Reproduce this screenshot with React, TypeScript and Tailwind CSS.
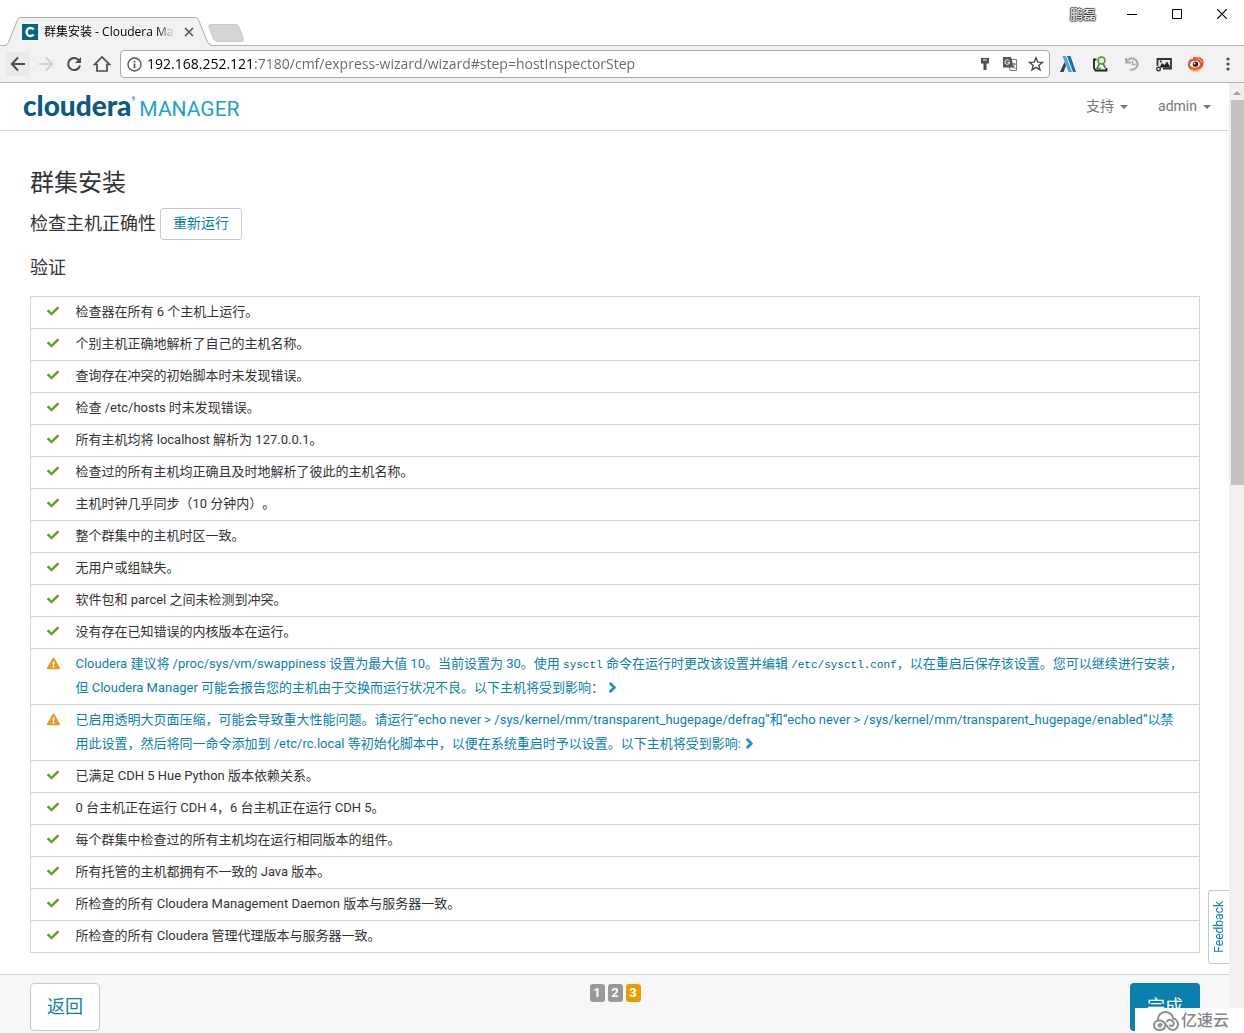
import type { ReactNode } from "react";
import { FaCheck, FaExclamationTriangle, FaChevronRight } from "react-icons/fa";

type Row = { kind: "ok" | "warn"; content: ReactNode };

const code = "font-['Liberation_Mono',monospace] text-[11px] leading-none text-[#006a8f]";

const rows: Row[] = [
  { kind: "ok", content: "检查器在所有 6 个主机上运行。" },
  { kind: "ok", content: "个别主机正确地解析了自己的主机名称。" },
  { kind: "ok", content: "查询存在冲突的初始脚本时未发现错误。" },
  { kind: "ok", content: "检查 /etc/hosts 时未发现错误。" },
  { kind: "ok", content: "所有主机均将 localhost 解析为 127.0.0.1。" },
  { kind: "ok", content: "检查过的所有主机均正确且及时地解析了彼此的主机名称。" },
  { kind: "ok", content: "主机时钟几乎同步（10 分钟内）。" },
  { kind: "ok", content: "整个群集中的主机时区一致。" },
  { kind: "ok", content: "无用户或组缺失。" },
  { kind: "ok", content: "软件包和 parcel 之间未检测到冲突。" },
  { kind: "ok", content: "没有存在已知错误的内核版本在运行。" },
  {
    kind: "warn",
    content: (
      <>
        Cloudera 建议将 /proc/sys/vm/swappiness 设置为最大值 10。当前设置为 30。使用{" "}
        <code className={code}>sysctl</code> 命令在运行时更改该设置并编辑{" "}
        <code className={code}>/etc/sysctl.conf</code>，以在重启后保存该设置。您可以继续进行安装，但 Cloudera Manager
        可能会报告您的主机由于交换而运行状况不良。以下主机将受到影响：
      </>
    ),
  },
  {
    kind: "warn",
    content:
      "已启用透明大页面压缩，可能会导致重大性能问题。请运行“echo never > /sys/kernel/mm/transparent_hugepage/defrag”和“echo never > /sys/kernel/mm/transparent_hugepage/enabled”以禁用此设置，然后将同一命令添加到 /etc/rc.local 等初始化脚本中，以便在系统重启时予以设置。以下主机将受到影响:",
  },
  { kind: "ok", content: "已满足 CDH 5 Hue Python 版本依赖关系。" },
  { kind: "ok", content: "0 台主机正在运行 CDH 4，6 台主机正在运行 CDH 5。" },
  { kind: "ok", content: "每个群集中检查过的所有主机均在运行相同版本的组件。" },
  { kind: "ok", content: "所有托管的主机都拥有不一致的 Java 版本。" },
  { kind: "ok", content: "所检查的所有 Cloudera Management Daemon 版本与服务器一致。" },
  { kind: "ok", content: "所检查的所有 Cloudera 管理代理版本与服务器一致。" },
];

function TabStrip() {
  return (
    <div className="flex h-[46px] shrink-0 items-end border-b border-[#b4b4b4] bg-white">
      <div className="relative -mb-px ml-1 flex h-[29px] w-[208px] items-center pl-[18px]">
        <svg className="absolute inset-0" width="208" height="29" viewBox="0 0 208 29" fill="none" aria-hidden="true">
          <path d="M0 29C4 28 4 26 5 24L13 4C14 1 15 .5 18 .5H190C193 .5 194 1 195 4L203 24C204 26 205 28 208 29Z" fill="#f2f2f2" />
          <path d="M0 28.5C4 28 4 26 5 24L13 4C14 1 15 .5 18 .5H190C193 .5 194 1 195 4L203 24C204 26 205 28 208 28.5" stroke="#aaa" />
        </svg>
        <svg className="relative shrink-0" width="16" height="16" viewBox="0 0 16 16" fill="none" aria-hidden="true">
          <path d="M0 0h16v16H0z" fill="#04677c" />
          <path d="M11.6 5.6C10.8 4.4 9.7 4 8.4 4 6.2 4 4.6 5.7 4.6 8s1.600 4 3.800 4c1.300 0 2.400-.5 3.200-1.600" stroke="#fff" strokeWidth="2.600" />
        </svg>
        <span className="relative ml-1.5 w-[133px] overflow-hidden whitespace-nowrap font-['Open_Sans','Noto_Sans_CJK_SC',sans-serif] text-xs text-black [mask-image:linear-gradient(to_right,black_112px,transparent_132px)]">
          群集安装 - Cloudera Ma
        </span>
        <button aria-label="关闭标签页" className="relative ml-[7px] shrink-0">
          <svg width="10" height="10" viewBox="0 0 10 10" stroke="#555" strokeWidth="1.600">
            <path d="M1 1l8 8M9 1L1 9" />
          </svg>
        </button>
      </div>
      <button aria-label="新标签页" className="-ml-1 mb-[3px]">
        <svg width="36" height="18" viewBox="0 0 36 18">
          <path d="M3 .5H26C29 .5 30 1 31 3L35 14C36 17 35 17.500 33 17.500H10C7 17.500 6 16 5 14L1 3C.5 1 1 .5 3 .5Z" fill="#d4d4d4" stroke="#cacaca" />
        </svg>
      </button>
      <div className="ml-auto flex items-start self-start">
        <span className="mr-[13px] mt-[7px] font-['Noto_Sans_CJK_SC',sans-serif] text-[13px] leading-[14px] text-white [text-shadow:1px_0_1px_#333,-1px_0_1px_#333,0_1px_1px_#333,0_-1px_1px_#333]">
          鹏磊
        </span>
        <button aria-label="最小化" className="flex h-[27px] w-[45px] items-center justify-center">
          <svg width="10" height="10" viewBox="0 0 10 10"><path d="M0 5.500h10" stroke="#000" /></svg>
        </button>
        <button aria-label="最大化" className="flex h-[27px] w-[45px] items-center justify-center">
          <svg width="10" height="10" viewBox="0 0 10 10"><path d="M.5.5h9v9h-9z" stroke="#000" fill="none" /></svg>
        </button>
        <button aria-label="关闭" className="flex h-[27px] w-[45px] items-center justify-center">
          <svg width="10" height="10" viewBox="0 0 10 10"><path d="M0 0l10 10M10 0L0 10" stroke="#000" strokeWidth="1.200" /></svg>
        </button>
      </div>
    </div>
  );
}

function Toolbar() {
  return (
    <div className="flex h-[37px] shrink-0 items-center border-b border-[#b4b4b4] bg-[#f2f2f2]">
      <button aria-label="后退" className="ml-1.5 flex h-6 w-6 items-center justify-center bg-[#ebebeb]">
        <svg width="16" height="16" viewBox="0 0 16 16" fill="none" stroke="#4c4c4c" strokeWidth="2"><path d="M15 8H2M8 1.500L1.800 8 8 14.500" /></svg>
      </button>
      <button aria-label="前进" className="ml-1 flex h-6 w-6 items-center justify-center">
        <svg width="16" height="16" viewBox="0 0 16 16" fill="none" stroke="#d2d2d2" strokeWidth="2"><path d="M1 8h13M8 1.500L14.200 8 8 14.500" /></svg>
      </button>
      <button aria-label="重新加载" className="ml-1 flex h-6 w-6 items-center justify-center">
        <svg width="16" height="16" viewBox="0 0 16 16" fill="none"><path d="M13 4.500A6 6 0 1 0 14 9.500" stroke="#4c4c4c" strokeWidth="2" /><path d="M15 1v6H9z" fill="#4c4c4c" /></svg>
      </button>
      <button aria-label="主页" className="ml-1 flex h-6 w-6 items-center justify-center">
        <svg width="18" height="18" viewBox="0 0 18 18" fill="none" stroke="#4c4c4c" strokeWidth="1.700"><path d="M1.500 9.500L9 2l7.500 7.500H14V16H4V9.500z" /></svg>
      </button>
      <div className="ml-1.5 flex h-[28px] min-w-0 flex-1 items-center rounded-sm border border-[#a6a6a6] bg-white pl-1.5 pr-[5px]">
        <svg className="shrink-0" width="15" height="15" viewBox="0 0 15 15" fill="none" aria-hidden="true">
          <circle cx="7.500" cy="7.500" r="6.500" stroke="#555" strokeWidth="1.400" />
          <path d="M7.500 6.500v4.700M7.500 3.700v1.700" stroke="#555" strokeWidth="1.700" />
        </svg>
        <input
          aria-label="地址"
          readOnly
          value="192.168.252.121:7180/cmf/express-wizard/wizard#step=hostInspectorStep"
          className="ml-[5px] min-w-0 flex-1 bg-[linear-gradient(to_right,#000_108px,#666_108px)] bg-clip-text font-['Open_Sans',sans-serif] text-sm text-transparent outline-none"
        />
        <svg className="shrink-0" width="10" height="14" viewBox="0 0 10 14" aria-hidden="true">
          <path d="M1 1h8v5.500H6.500V13h-3V6.500H1z" fill="#4c4c4c" /><path d="M3 3h4" stroke="#fff" strokeWidth="1" />
        </svg>
        <svg className="ml-3 shrink-0" width="16" height="16" viewBox="0 0 16 16" fill="none" aria-hidden="true">
          <path d="M6 3.500h8.500v11H8z" fill="#fff" stroke="#777" />
          <path d="M1 1h8l3 10.500H1z" fill="#555" />
          <path d="M7.300 4.800C6.700 4 6 3.800 5.300 3.800a2.300 2.300 0 1 0 2.300 2.600H5.400" stroke="#fff" />
          <path d="M9 8h5M11.500 7v1M13 8c-.5 2-2 3.500-3 4M10.500 9.500l3 3.500" stroke="#777" />
        </svg>
        <svg className="ml-2.5 shrink-0" width="16" height="16" viewBox="0 0 16 16" fill="none" stroke="#4c4c4c" strokeWidth="1.400" aria-hidden="true">
          <path d="M8 1.700l1.700 4.400 4.700.3-3.600 3 1.200 4.500L8 11.400 4 13.900l1.200-4.500-3.600-3 4.700-.3z" />
        </svg>
      </div>
      <div className="flex items-center gap-4 pl-2.5 pr-2">
        <svg width="16" height="16" viewBox="0 0 16 16" aria-hidden="true">
          <path d="M4.500 6L6 9.500 3.500 16H0z" fill="#333c44" />
          <path d="M2.500 0H6l6 16H8.500z" fill="#4aa6dc" />
          <path d="M7 0h3.500L16 16h-3z" fill="#1b6fae" />
        </svg>
        <svg width="16" height="16" viewBox="0 0 16 16" fill="none" aria-hidden="true">
          <path d="M4.500 3.500H2v8.500l1.500 2.500H14.500V12" stroke="#222" strokeWidth="1.800" />
          <circle cx="9.500" cy="4.500" r="3.500" fill="#e6f0de" stroke="#4a8a2c" strokeWidth="1.500" />
          <path d="M7.500 7.500L5 12.500h4M11 7.500l2.500 4.500" stroke="#4a8a2c" strokeWidth="1.600" />
        </svg>
        <svg width="16" height="16" viewBox="0 0 16 16" fill="none" stroke="#aaa" strokeWidth="2" aria-hidden="true">
          <path d="M2 2v4.500h5M2.500 6A5.700 5.700 0 1 1 6 13.500" /><path d="M8.500 5v3.500h3" strokeWidth="1.500" />
        </svg>
        <svg width="16" height="16" viewBox="0 0 16 16" fill="none" aria-hidden="true">
          <path d="M1.500 10V3h13.500v9.500H7" stroke="#333" strokeWidth="1.800" fill="#e8e8e8" />
          <path d="M3.500 11.500L6 7l2.500 2L11 5.500l3.500 6z" fill="#222" />
          <circle cx="4.800" cy="5.500" r="1" fill="#222" />
          <circle cx="2.500" cy="13" r="1.800" stroke="#333" strokeWidth="1.400" fill="#fff" />
        </svg>
        <svg width="16" height="16" viewBox="0 0 16 16" fill="none" aria-hidden="true">
          <path d="M1.500 3.500L5 3 5.500.5l3 1C12 .5 15.500 2 15.500 6c.3 5-3 8.500-8 8.500S0 12 0 9c0-2 .5-4 1.500-5.500z" fill="#e2522f" />
          <path d="M1 11.500c3 3 9.500 3 13-.5-1 3-3.500 4.800-7 4.800S1.500 14 1 11.500z" fill="#f5b32c" />
          <path d="M9.500 3c2.500-.3 4 1 4.200 3.300" stroke="#f7c9a0" />
          <ellipse cx="7" cy="8.300" rx="5" ry="3.500" fill="#fff" />
          <circle cx="7.500" cy="8.300" r="2.700" fill="#3a1a12" /><circle cx="6.700" cy="7.500" r=".9" fill="#fff" />
        </svg>
        <button aria-label="菜单" className="flex h-6 w-4 items-center justify-center">
          <svg width="4" height="14" viewBox="0 0 4 14" fill="#4c4c4c"><circle cx="2" cy="2" r="1.600" /><circle cx="2" cy="7" r="1.600" /><circle cx="2" cy="12" r="1.600" /></svg>
        </button>
      </div>
    </div>
  );
}

function Caret() {
  return (
    <svg width="8" height="4" viewBox="0 0 8 4" fill="currentColor" aria-hidden="true">
      <path d="M0 0h8L4 4z" />
    </svg>
  );
}

function PageHeader() {
  return (
    <header className="flex h-12 shrink-0 items-center border-b border-[#ddd] bg-white pl-[23px] pr-[18px]">
      <a href="#home" className="flex items-baseline pb-[3px] leading-none">
        <span className="font-['Lato',sans-serif] text-[28px] leading-7 font-black text-[#0b5a7f]">cloudera</span>
        <span className="self-start pt-1.5 text-[5px] text-[#0b5a7f]">®</span>
        <span className="ml-1 text-[21px] text-[#1ba0d8]">MANAGER</span>
      </a>
      <nav className="ml-auto flex gap-[30px] text-[14px] text-[#777]">
        <button className="flex items-center gap-1.5">支持 <Caret /></button>
        <button className="flex items-center gap-1.5">admin <Caret /></button>
      </nav>
    </header>
  );
}

function Checks() {
  return (
    <table className="mt-3.5 w-full border-collapse border border-[#d5d5d5] text-[13px] leading-6 [text-spacing-trim:space-all]">
      <tbody>
        {rows.map((row, i) => (
          <tr key={i} className="border border-[#d5d5d5]">
            <td className="w-[45px] pl-4 pt-2 align-top">
              {row.kind === "ok" ? (
                <FaCheck className="size-3 text-[#62a420]" aria-label="通过" />
              ) : (
                <FaExclamationTriangle className="size-[13px] text-[#e8991c]" aria-label="警告" />
              )}
            </td>
            <td className="pb-1 pr-4 pt-[3px] align-top">
              {row.kind === "ok" ? (
                row.content
              ) : (
                <a href="#hosts" className="text-[#0b7fad]">
                  {row.content}{" "}
                  <FaChevronRight className="inline size-[11px] overflow-visible stroke-current stroke-[50] align-[-1px] text-[#1c93cc]" />
                </a>
              )}
            </td>
          </tr>
        ))}
      </tbody>
    </table>
  );
}

function PageFooter() {
  return (
    <footer className="flex h-[59px] shrink-0 items-start justify-between border-t border-[#d5d5d5] bg-[#f7f7f7] pl-[30px] pr-[29px] pt-2">
      <button className="h-12 w-[70px] rounded border border-[#c8c8c8] bg-white text-lg text-[#0b7fad]">返回</button>
      <ol className="mt-px flex gap-[3px] text-[13px] font-bold leading-[18px] text-white">
        <li className="w-[15px] rounded-[3px] bg-[#999] text-center">1</li>
        <li className="w-[15px] rounded-[3px] bg-[#999] text-center">2</li>
        <li className="w-[15px] rounded-[3px] bg-[#e59c00] text-center">3</li>
      </ol>
      <button className="h-12 w-[70px] rounded bg-[#0b7fad] text-lg text-white">完成</button>
    </footer>
  );
}

function Scrollbar() {
  return (
    <div className="flex w-[15px] shrink-0 flex-col items-center bg-[#f0f0f0]" aria-hidden="true">
      <svg className="mb-1 mt-1.5" width="8" height="7" viewBox="0 0 8 7"><path d="M0 6l4-4 4 4z" fill="#a0a0a0" /></svg>
      <div className="ml-0.5 h-[385px] w-[13px] bg-[#c1c1c1]" />
    </div>
  );
}

export default function App() {
  return (
    <div className="relative flex h-screen flex-col overflow-hidden bg-white font-['Roboto','Noto_Sans_CJK_SC',sans-serif] text-[#333]">
      <TabStrip />
      <Toolbar />
      <div className="flex min-h-0 flex-1">
        <div className="relative flex min-w-0 flex-1 flex-col">
          <PageHeader />
          <main className="min-h-0 flex-1 overflow-hidden pl-[30px] pr-[29px] pt-9">
            <h1 className="text-2xl">群集安装</h1>
            <div className="mt-[9px] flex items-center gap-1">
              <h2 className="text-lg">检查主机正确性</h2>
              <button className="h-8 rounded-[3px] border border-[#c8c8c8] bg-white px-3 pb-0.5 text-sm text-[#0b7fad]">重新运行</button>
            </div>
            <h2 className="mt-3.5 text-lg">验证</h2>
            <Checks />
          </main>
          <PageFooter />
          <button className="absolute bottom-[69px] right-0 flex h-[74px] w-[21px] items-center justify-center rounded-l border border-r-0 border-[#c8c8c8] bg-white text-xs text-[#0b7fad]">
            <span className="rotate-180 [writing-mode:vertical-rl]">Feedback</span>
          </button>
        </div>
        <Scrollbar />
      </div>
      <div className="absolute bottom-0 right-0 flex h-[25px] w-[109px] items-center bg-white pl-[18px] text-[#85858d]">
        <svg width="26" height="20" viewBox="0 0 26 20" fill="none" stroke="#8c8c94" strokeWidth="2" strokeLinecap="round" aria-hidden="true">
          <path d="M5 8C5 4 8.500 1 12.500 1S20 4 20 7.500c3 .5 5 3 5 5.700C25 16.500 22.500 19 19.500 19c-6 0-6-9.500-13-9.500C3.500 9.500 1 11.500 1 14.300S3.500 19 6.500 19c3.500 0 5.500-2 5.500-4.500" />
          <path d="M7.500 15.500c-1 .3-2-.3-2-1.200 0-1.200 2-1.800 3.200-.5M14 10.500c1-1.500 3-2 4.500-1.200 2.500 1.200 3 4.200 1 5.500-1 .5-2 .2-2.500-.6" />
        </svg>
        <span className="ml-0.5 text-base font-medium">亿速云</span>
      </div>
    </div>
  );
}
